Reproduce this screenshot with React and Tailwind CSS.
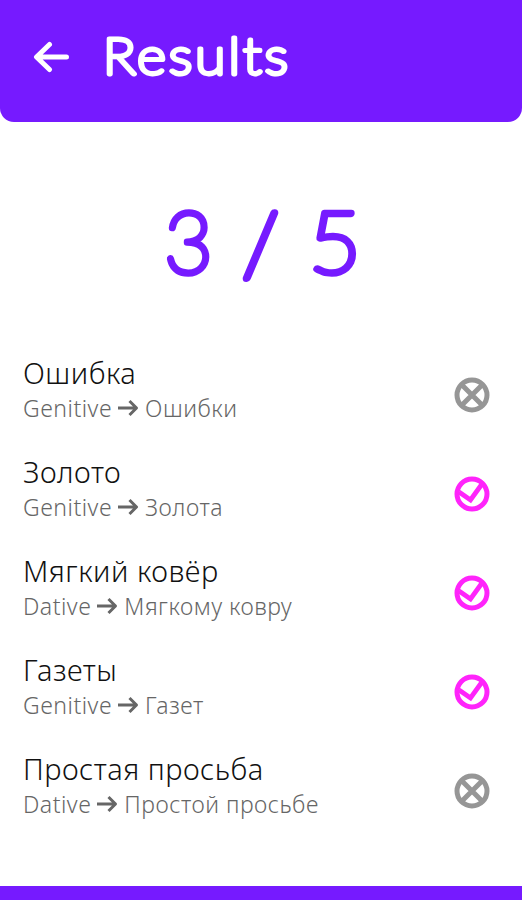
import React from 'react';

const results = [
  { word: 'Ошибка', grammarCase: 'Genitive', answer: 'Ошибки', correct: false },
  { word: 'Золото', grammarCase: 'Genitive', answer: 'Золота', correct: true },
  { word: 'Мягкий ковёр', grammarCase: 'Dative', answer: 'Мягкому ковру', correct: true },
  { word: 'Газеты', grammarCase: 'Genitive', answer: 'Газет', correct: true },
  { word: 'Простая просьба', grammarCase: 'Dative', answer: 'Простой просьбе', correct: false },
];

// Thin glyphs with a thick round stroke, for soft stroke ends
function RoundedText({ children, className, ...props }) {
  return (
    <svg className={className} fill="currentColor" stroke="currentColor" strokeLinejoin="round" strokeLinecap="round">
      <text lengthAdjust="spacingAndGlyphs" {...props}>{children}</text>
    </svg>
  );
}

function StatusIcon({ correct }) {
  return (
    <svg
      className={correct ? 'size-9 shrink-0 text-[#ff24fb]' : 'size-9 shrink-0 text-[#969696]'}
      fill="none"
      viewBox="0 0 36 36"
      stroke="currentColor"
    >
      <circle cx="18" cy="18" r="15" strokeWidth="5" />
      {correct ? (
        <path strokeWidth="4.800" d="M5 16L16.500 24L28 8" />
      ) : (
        <path strokeWidth="5" d="M8 8L28 28M28 8L8 28" />
      )}
    </svg>
  );
}

function ResultRow({ item }) {
  return (
    <li className="flex h-[99px] items-center justify-between pl-[23px] pr-8">
      <div className="pb-[11px]">
        <p className="text-[29px] leading-[38px] font-light tracking-[0.5px] text-[#111]">{item.word}</p>
        <p className="flex items-center text-[23px] leading-8 font-light tracking-[0.5px] text-[#666]">
          {item.grammarCase}
          <svg className="mx-1.5 h-5 w-[21px]" fill="none" viewBox="0 0 21 20" stroke="currentColor">
            <path strokeLinejoin="round" strokeWidth="3" d="M0 10H18.500M11.500 3L18.500 10L11.500 17" />
          </svg>
          {item.answer}
        </p>
      </div>
      <StatusIcon correct={item.correct} />
    </li>
  );
}

function App() {
  return (
    <div className="flex h-[900px] w-full flex-col bg-white font-['Noto_Sans','Open_Sans',sans-serif]">
      <header className="flex h-[122px] items-center rounded-b-[14px] bg-[#761aff] pb-2 pl-[33px] text-white">
        <button type="button" aria-label="Back">
          <svg className="h-8 w-9" fill="none" viewBox="0 0 36 32" stroke="currentColor">
            <path strokeLinecap="round" strokeLinejoin="round" strokeWidth="5" d="M33.500 16H4M16.500 3.500L3.500 16L16.500 28.500" />
          </svg>
        </button>
        <h1 className="ml-[34px] font-['Lato',sans-serif] text-[50px] font-thin tracking-[3px]">
          <RoundedText className="h-[72px] w-[200px]" x="0" y="52.500" textLength="188" strokeWidth="4.800">
            Results
          </RoundedText>
        </h1>
      </header>

      <div className="flex h-[223px] items-center justify-center gap-[22px] font-['Lato',sans-serif] text-[87px] font-thin text-[#761aff]">
        <RoundedText className="h-[130px] w-[54px]" x="4.500" y="104" textLength="48" strokeWidth="6.500">3</RoundedText>
        <RoundedText className="h-[130px] w-[50px]" x="6.500" y="106" textLength="36" strokeWidth="7">/</RoundedText>
        <RoundedText className="h-[130px] w-[54px]" x="1" y="104" textLength="52" strokeWidth="6.500">5</RoundedText>
      </div>

      <ul className="flex flex-col">
        {results.map((item) => (
          <ResultRow key={item.word} item={item} />
        ))}
      </ul>

      <footer className="mt-auto h-3.5 bg-[#761aff]" />
    </div>
  );
}

export default App;
